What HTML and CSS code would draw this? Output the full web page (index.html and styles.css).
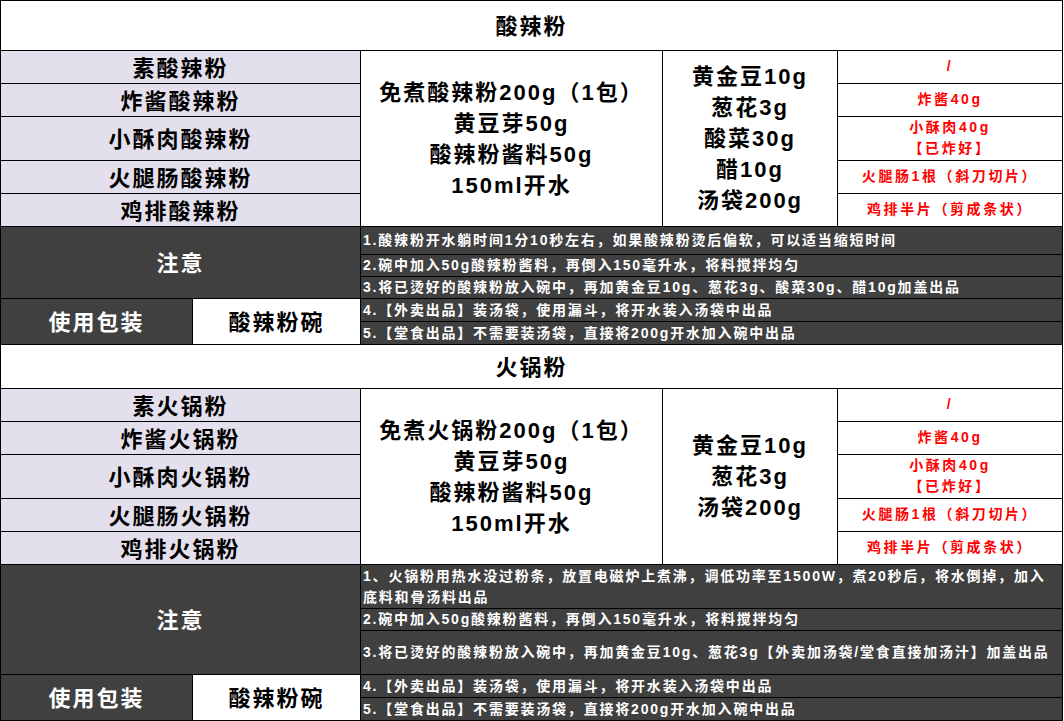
FILE: index.html
```html
<!DOCTYPE html>
<html lang="zh-CN">
<head>
<meta charset="utf-8">
<title>酸辣粉 / 火锅粉</title>
<link rel="stylesheet" href="styles.css">
</head>
<body>
<div class="sheet">
  <div class="cell title">酸辣粉</div>
  <div class="cell dish">素酸辣粉</div>
  <div class="cell base">免煮酸辣粉200g（1包）<br>黄豆芽50g<br>酸辣粉酱料50g<br>150ml开水</div>
  <div class="cell extra">黄金豆10g<br>葱花3g<br>酸菜30g<br>醋10g<br>汤袋200g</div>
  <div class="cell topping">/</div>
  <div class="cell dish">炸酱酸辣粉</div>
  <div class="cell topping">炸酱40g</div>
  <div class="cell dish">小酥肉酸辣粉</div>
  <div class="cell topping">小酥肉40g<br>【已炸好】</div>
  <div class="cell dish">火腿肠酸辣粉</div>
  <div class="cell topping">火腿肠1根（斜刀切片）</div>
  <div class="cell dish">鸡排酸辣粉</div>
  <div class="cell topping">鸡排半片（剪成条状）</div>
  <div class="cell note-label">注意</div>
  <div class="cell note">1.酸辣粉开水躺时间1分10秒左右，如果酸辣粉烫后偏软，可以适当缩短时间</div>
  <div class="cell note">2.碗中加入50g酸辣粉酱料，再倒入150毫升水，将料搅拌均匀</div>
  <div class="cell note">3.将已烫好的酸辣粉放入碗中，再加黄金豆10g、葱花3g、酸菜30g、醋10g加盖出品</div>
  <div class="cell pack-label">使用包装</div>
  <div class="cell pack">酸辣粉碗</div>
  <div class="cell note">4.【外卖出品】装汤袋，使用漏斗，将开水装入汤袋中出品</div>
  <div class="cell note">5.【堂食出品】不需要装汤袋，直接将200g开水加入碗中出品</div>

  <div class="cell title">火锅粉</div>
  <div class="cell dish">素火锅粉</div>
  <div class="cell base">免煮火锅粉200g（1包）<br>黄豆芽50g<br>酸辣粉酱料50g<br>150ml开水</div>
  <div class="cell extra">黄金豆10g<br>葱花3g<br>汤袋200g</div>
  <div class="cell topping">/</div>
  <div class="cell dish">炸酱火锅粉</div>
  <div class="cell topping">炸酱40g</div>
  <div class="cell dish">小酥肉火锅粉</div>
  <div class="cell topping">小酥肉40g<br>【已炸好】</div>
  <div class="cell dish">火腿肠火锅粉</div>
  <div class="cell topping">火腿肠1根（斜刀切片）</div>
  <div class="cell dish">鸡排火锅粉</div>
  <div class="cell topping">鸡排半片（剪成条状）</div>
  <div class="cell note-label">注意</div>
  <div class="cell note">1、火锅粉用热水没过粉条，放置电磁炉上煮沸，调低功率至1500W，煮20秒后，将水倒掉，加入<br>底料和骨汤料出品</div>
  <div class="cell note">2.碗中加入50g酸辣粉酱料，再倒入150毫升水，将料搅拌均匀</div>
  <div class="cell note">3.将已烫好的酸辣粉放入碗中，再加黄金豆10g、葱花3g【外卖加汤袋/堂食直接加汤汁】加盖出品</div>
  <div class="cell pack-label">使用包装</div>
  <div class="cell pack">酸辣粉碗</div>
  <div class="cell note">4.【外卖出品】装汤袋，使用漏斗，将开水装入汤袋中出品</div>
  <div class="cell note">5.【堂食出品】不需要装汤袋，直接将200g开水加入碗中出品</div>
</div>
</body>
</html>
```

FILE: styles.css
```css
html, body {
  margin: 0;
  padding: 0;
  background: #ffffff;
}

body {
  font-family: "Liberation Sans", "Noto Sans CJK SC", sans-serif;
  font-weight: bold;
  color: #000000;
}

.sheet {
  display: grid;
  grid-template-columns: 191px 167px 301px 174px 224px;
  grid-template-rows:
    49px 32px 32px 43px 32px 32px
    27px 21px 21px 22px 22px
    43px 32px 32px 43px 32px 32px
    43px 21px 43px 22px 22px;
  gap: 1px;
  padding: 1px;
  background: #000000;
  width: max-content;
}

.cell {
  display: flex;
  align-items: center;
  justify-content: center;
  text-align: center;
  background: #ffffff;
  overflow: hidden;
}

.title {
  grid-column: 1 / -1;
  font-size: 22px;
  letter-spacing: 2px;
  padding-bottom: 4px;
}

.dish {
  grid-column: span 2;
  background: #e4dfec;
  font-size: 22px;
  letter-spacing: 2px;
  padding-bottom: 3px;
}

.base,
.extra {
  grid-row: span 5;
  font-size: 22px;
  letter-spacing: 2px;
  line-height: 31px;
}

.topping {
  color: #ff0000;
  font-size: 14px;
  letter-spacing: 2.6px;
  line-height: 21px;
  padding-bottom: 1px;
}

.note-label {
  grid-column: span 2;
  grid-row: span 3;
  background: #404040;
  color: #ffffff;
  font-size: 22px;
  letter-spacing: 2px;
  padding-bottom: 3px;
}

.note {
  grid-column: span 3;
  justify-content: flex-start;
  text-align: left;
  padding-left: 2px;
  background: #404040;
  color: #ffffff;
  font-size: 14px;
  letter-spacing: 1.8px;
  line-height: 21px;
  white-space: nowrap;
}

.pack-label {
  grid-row: span 2;
  background: #404040;
  color: #ffffff;
  font-size: 22px;
  letter-spacing: 2px;
  padding-bottom: 3px;
}

.pack {
  grid-row: span 2;
  font-size: 22px;
  letter-spacing: 2px;
  padding-bottom: 3px;
}
```
